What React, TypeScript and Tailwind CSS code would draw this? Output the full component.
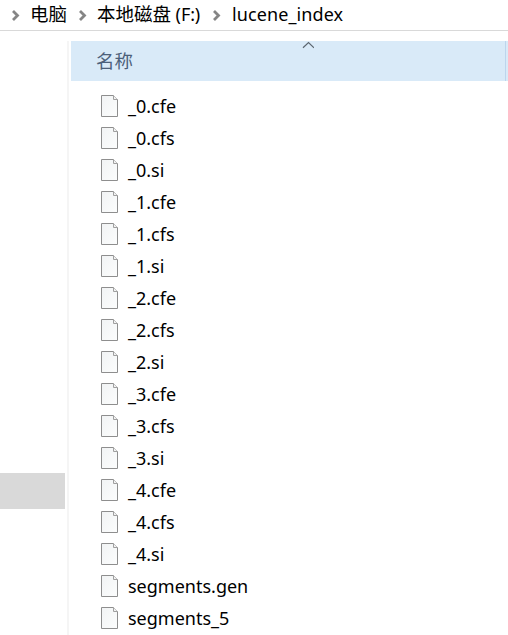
const files = [
  '_0.cfe', '_0.cfs', '_0.si',
  '_1.cfe', '_1.cfs', '_1.si',
  '_2.cfe', '_2.cfs', '_2.si',
  '_3.cfe', '_3.cfs', '_3.si',
  '_4.cfe', '_4.cfs', '_4.si',
  'segments.gen', 'segments_5',
];

function Separator() {
  return (
    <svg className="block h-[11px] w-2 shrink-0" viewBox="0 0 8 11" fill="none" stroke="#858585" strokeWidth="2.8">
      <path d="M1 1 L5.5 5.5 L1 10" />
    </svg>
  );
}

function FileIcon() {
  return (
    <svg className="block h-[22px] w-[17px] shrink-0" viewBox="0 0 17 22">
      <defs>
        <linearGradient id="paper" x1="0" y1="0" x2="1" y2="1">
          <stop offset="0" stopColor="#f1f3f4" />
          <stop offset="1" stopColor="#fcfdfd" />
        </linearGradient>
      </defs>
      <path d="M.5 .5H12.5L16.5 4.5V21.5H.5Z" fill="url(#paper)" stroke="#8e8e8e" />
      <path d="M12.5 .5V4.5H16.5" fill="#f2f2f2" stroke="#a0a0a0" />
    </svg>
  );
}

export default function App() {
  return (
    <div className="flex h-[635px] w-[508px] flex-col overflow-hidden bg-white font-['Noto_Sans','Noto_Sans_CJK_SC',sans-serif] text-black">
      <nav className="flex h-[31px] shrink-0 items-center border-b border-[#d9d9d9] pl-3 text-[18px] leading-[30px] whitespace-nowrap">
        <Separator />
        <span className="ml-[10px] w-[49px] pb-[2px] text-[18.5px] leading-7">电脑</span>
        <Separator />
        <span className="ml-[10px] w-[116px] pb-[2px] leading-7">
          <span className="text-[18.5px]">本地磁盘</span>
          <span className="tracking-[-0.1px]"> (F:)</span>
        </span>
        <Separator />
        <span className="ml-[11px] pb-[2px] leading-7 tracking-[0.1px]">lucene_index</span>
      </nav>
      <div className="flex min-h-0 flex-1">
        <aside className="w-[67px] shrink-0 pt-[442px]">
          <div className="h-9 w-[65px] bg-[#d9d9d9]" />
        </aside>
        <main className="mt-[10px] flex min-w-0 flex-1 flex-col border-l-2 border-[#f5f5f5] pl-[2px]">
          <header className="relative flex h-10 shrink-0 items-center bg-[#d9eaf8] pl-[25px] text-[18.5px] text-[#4c607a]">
            名称
            <svg className="absolute top-0 left-[231px] h-2 w-3" viewBox="0 0 12 8" fill="none" stroke="#5c6670" strokeWidth="1.2">
              <path d="M1 6.8 L6.5 1.5 L12 6.8" />
            </svg>
            <div className="absolute top-0 left-[434px] h-10 w-px bg-[#bdd5ec]" />
          </header>
          <ul className="pt-[9px] text-[18px]">
            {files.map((name) => (
              <li key={name} className="flex h-8 items-center gap-[10px] pl-[30px]">
                <FileIcon />
                <span className="leading-8">{name}</span>
              </li>
            ))}
          </ul>
        </main>
      </div>
    </div>
  );
}
